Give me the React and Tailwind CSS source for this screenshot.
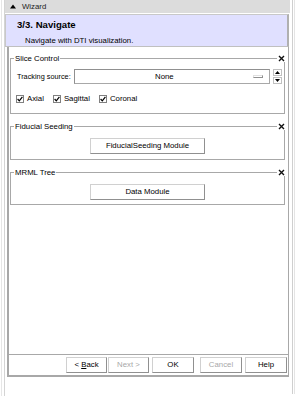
import React from "react";

function CloseX() {
  return (
    <div className="absolute right-[-2px] top-[-4px] bg-white px-[1px]">
      <svg width="7" height="7" viewBox="0 0 7 7">
        <path d="M1 1 L6 6 M6 1 L1 6" stroke="#111" strokeWidth="1.4" />
      </svg>
    </div>
  );
}

function Frame({ title, className, children }) {
  return (
    <div className={"relative border border-[#a8a8a8] " + className}>
      <div className="absolute left-[3px] top-[-5px] bg-white px-[1px] leading-[9px] whitespace-nowrap">{title}</div>
      <CloseX />
      {children}
    </div>
  );
}

function Check({ label, className }) {
  return (
    <div className={"flex items-center " + className}>
      <div className="w-[8px] h-[8px] border border-[#808080] bg-white flex items-center justify-center">
        <svg width="6" height="6" viewBox="0 0 6 6">
          <path d="M0.6 3 L2.3 4.8 L5.4 0.8" stroke="#000" strokeWidth="1.2" fill="none" />
        </svg>
      </div>
      <span className="ml-[3px]">{label}</span>
    </div>
  );
}

function Btn({ children, className, disabled }) {
  return (
    <div
      className={
        "h-[16px] flex items-center justify-center whitespace-nowrap border-t border-l border-[#d0d0d0] border-r border-b border-r-[#909090] border-b-[#909090] bg-white " +
        (disabled ? "text-[#a8a8a8] " : "") +
        className
      }
    >
      {children}
    </div>
  );
}

export default function App() {
  return (
    <div className="w-[295px] h-[400px] bg-white flex font-['Liberation_Sans',Arial,sans-serif] text-[7.8px] leading-none text-black overflow-hidden">
      {/* left edge */}
      <div className="w-[5px] h-[396px] flex">
        <div className="w-[1px] ml-[1px] bg-[#e6e6e6]" />
        <div className="w-[1px] ml-[2px] bg-[#d4d4d4]" />
      </div>
      {/* main column */}
      <div className="w-[286px] flex flex-col">
        {/* header */}
        <div className="h-[13px] w-[285px] bg-[#dcdcdc] flex items-center">
          <svg width="6" height="5" viewBox="0 0 6 5" className="ml-[5px]">
            <path d="M0 4.5 L3 0.5 L6 4.5 Z" fill="#000" />
          </svg>
          <span className="ml-[6px] text-[#222]">Wizard</span>
        </div>
        {/* blue box */}
        <div className="mt-[1px] h-[33px] w-[284px] bg-[#e0e0ff] border-t border-t-[#c8c8c8] border-l border-l-[#c8c8c8] border-r-2 border-r-[#b0b0b0] border-b border-b-[#c0c0c0] flex flex-col">
          <div className="mt-[5px] ml-[11px] font-bold text-[9.6px]">3/3. Navigate</div>
          <div className="mt-[7px] ml-[19px]">Navigate with DTI visualization.</div>
        </div>
        {/* container */}
        <div className="ml-[2px] w-[282px] h-[330px] border-l-2 border-l-[#a8a8a8] border-r border-r-[#a8a8a8] border-b-2 border-b-[#a8a8a8] flex flex-col">
          <div className="flex-1 flex flex-col pl-[1px] pr-[3px]">
            <Frame title="Slice Control" className="mt-[11px] h-[56px]">
              <div className="flex items-center mt-[10px]">
                <span className="ml-[6px] w-[57px] whitespace-nowrap shrink-0 text-[7.3px]">Tracking source:</span>
                <div className="w-[196px] h-[15px] shrink-0 border border-[#a8a8a8] border-t-[#909090] border-l-[#909090] flex items-center">
                  <span className="ml-[80px]">None</span>
                  <div className="ml-auto mr-[6px] w-[10px] h-[3px] border border-[#909090] border-t-[#e0e0e0] border-l-[#e0e0e0]" />
                </div>
                <div className="ml-[3px] flex flex-col gap-[1px] shrink-0">
                  <div className="w-[9px] h-[7px] border border-[#c0c0c0] flex items-center justify-center">
                    <svg width="5" height="3" viewBox="0 0 5 3"><path d="M0 3 L2.5 0 L5 3 Z" fill="#000" /></svg>
                  </div>
                  <div className="w-[9px] h-[7px] border border-[#c0c0c0] flex items-center justify-center">
                    <svg width="5" height="3" viewBox="0 0 5 3"><path d="M0 0 L2.5 3 L5 0 Z" fill="#000" /></svg>
                  </div>
                </div>
              </div>
              <div className="flex items-center mt-[11px]">
                <Check label="Axial" className="ml-[5px]" />
                <Check label="Sagittal" className="ml-[9px]" />
                <Check label="Coronal" className="ml-[9px]" />
              </div>
            </Frame>
            <Frame title="Fiducial Seeding" className="mt-[12px] h-[34px]">
              <Btn className="mt-[11px] ml-[79px] w-[115px]">FiducialSeeding Module</Btn>
            </Frame>
            <Frame title="MRML Tree" className="mt-[12px] h-[33px]">
              <Btn className="mt-[11px] ml-[79px] w-[115px]">Data Module</Btn>
            </Frame>
          </div>
          {/* bottom */}
          <div className="h-[21px] border-t border-t-[#a8a8a8] flex items-start pt-[2px]">
            <Btn className="ml-[57px] w-[41px]">
              <span>&lt; <span className="underline">B</span>ack</span>
            </Btn>
            <Btn className="ml-[1px] w-[41px]" disabled>Next &gt;</Btn>
            <Btn className="ml-[3px] w-[42px]">OK</Btn>
            <Btn className="ml-[6px] w-[42px]" disabled>Cancel</Btn>
            <Btn className="ml-[3px] w-[42px]">Help</Btn>
          </div>
        </div>
      </div>
      {/* right edge */}
      <div className="w-[4px] h-[394px] flex">
        <div className="w-[1px] ml-[1px] bg-[#cfcfcf]" />
        <div className="w-[1px] ml-[1px] bg-[#e4e4e4]" />
      </div>
    </div>
  );
}
